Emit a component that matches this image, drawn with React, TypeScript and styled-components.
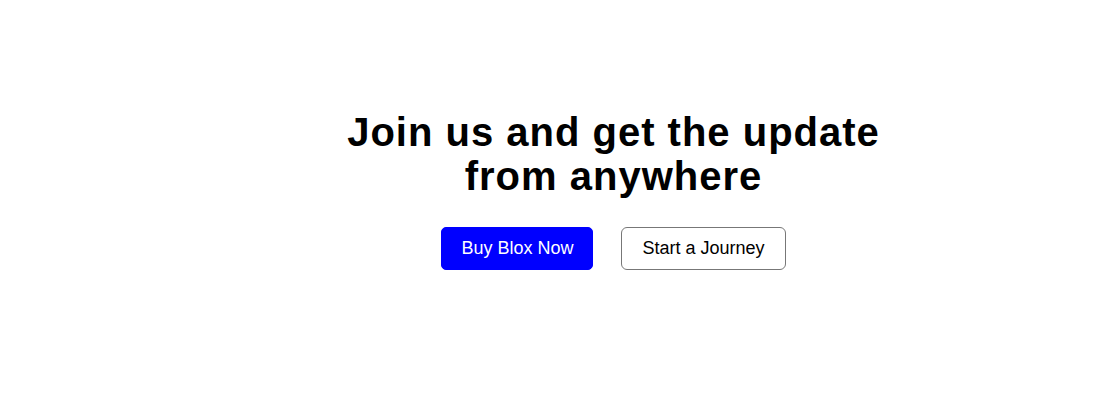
import React from "react";
import styled, { createGlobalStyle } from "styled-components";

const Global = createGlobalStyle`
  html, body { margin: 0; padding: 0; background: #fff; }
  body { font-family: "Liberation Sans", Arial, sans-serif; }
`;

const Hero = styled.section`
  display: flex;
  flex-direction: column;
  align-items: center;
  padding: 110px 0 0 124px;
`;

const Title = styled.h1`
  margin: 0;
  font-size: 40px;
  line-height: 44px;
  font-weight: 700;
  letter-spacing: 1px;
  text-align: center;
  color: #000;
`;

const Actions = styled.div`
  display: flex;
  gap: 28px;
  margin-top: 29px;
`;

const Button = styled.button<{ $primary?: boolean }>`
  font-family: "Liberation Sans", Arial, sans-serif;
  font-size: 18px;
  height: 43px;
  padding: ${(p) => (p.$primary ? "0 19px" : "0 20px")};
  border-radius: ${(p) => (p.$primary ? "5px" : "6px")};
  cursor: pointer;
  border: 1px solid ${(p) => (p.$primary ? "#0000ff" : "#777")};
  background: ${(p) => (p.$primary ? "#0000ff" : "#fff")};
  color: ${(p) => (p.$primary ? "#fff" : "#000")};
`;

export default function App() {
  return (
    <>
      <Global />
      <Hero>
        <Title>
          Join us and get the update
          <br />
          from anywhere
        </Title>
        <Actions>
          <Button $primary>Buy Blox Now</Button>
          <Button>Start a Journey</Button>
        </Actions>
      </Hero>
    </>
  );
}
